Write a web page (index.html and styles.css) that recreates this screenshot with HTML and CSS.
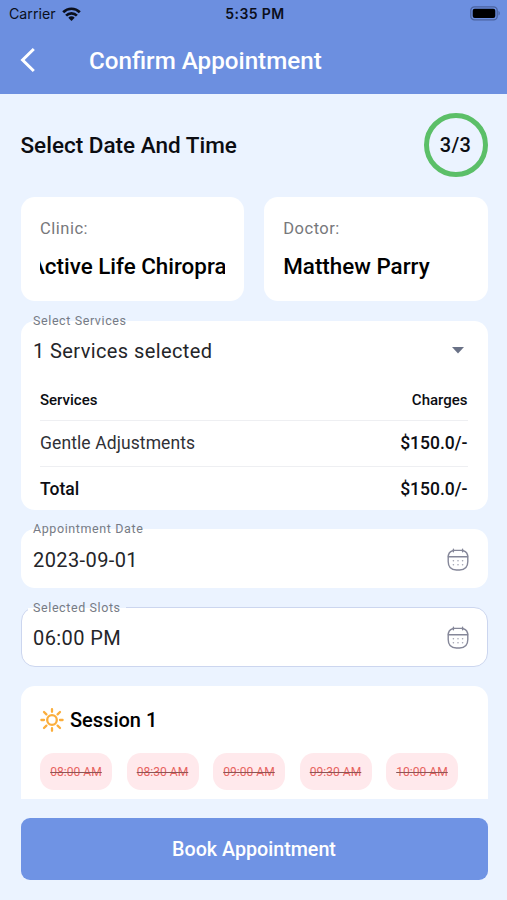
FILE: index.html
```html
<!DOCTYPE html>
<html lang="en">
<head>
<meta charset="utf-8">
<title>Confirm Appointment</title>
<link rel="stylesheet" href="styles.css">
</head>
<body>
<svg class="defs" width="0" height="0">
  <symbol id="calendar" viewBox="0 0 22 24">
    <g fill="none" stroke="#858799" stroke-width="1.4" stroke-linecap="round">
      <path d="M5.6 2.8C2.6 3.6 1.2 6 1.2 9.4v4.2c0 5.8 2.8 8.4 8.2 8.4h3.2c5.4 0 8.2-2.6 8.2-8.4V9.4c0-3.4-1.4-5.8-4.4-6.6"/>
      <path d="M6.6 2.4h8.8M1.3 8.7h19.4M6.4 1.3v2.4M15.6 1.3v2.4"/>
    </g>
    <path d="M6.4 12.8h.01M11 12.8h.01M15.6 12.8h.01M6.4 16.8h.01M11 16.8h.01M15.6 16.8h.01" fill="none" stroke="#a3a5b3" stroke-width="1.6" stroke-linecap="round"/>
  </symbol>
</svg>
<div class="screen">
  <header class="header">
    <div class="status">
      <div class="carrier"><span>Carrier</span>
        <svg width="19" height="14" viewBox="0 0 19 14"><g fill="none" stroke="#0b0f1c" stroke-width="2.7"><path d="M1.2 5.2a11.7 11.7 0 0 1 16.6 0"/><path d="M4.1 8.6a7.6 7.6 0 0 1 10.8 0"/></g><path d="M9.5 13.9 6.3 10.7a4.5 4.5 0 0 1 6.4 0z" fill="#0b0f1c"/></svg>
      </div>
      <div class="clock">5:35 PM</div>
      <svg class="battery" width="31" height="15" viewBox="0 0 31 15"><rect x=".8" y=".8" width="26.4" height="13" rx="3.6" fill="none" stroke="#4b639e" stroke-width="1.3"/><rect x="2.7" y="2.7" width="22.6" height="9.2" rx="2" fill="#000"/><path d="M28.5 5v4.6c1.7-.6 1.7-4 0-4.6z" fill="#4b639e"/></svg>
    </div>
    <div class="bar">
      <svg class="back" width="16" height="26" viewBox="0 0 16 26"><path d="M13.8 2 2.6 13l11.2 11" fill="none" stroke="#fff" stroke-width="3"/></svg>
      <h1>Confirm Appointment</h1>
    </div>
  </header>
  <main class="content">
    <div class="step"><h2>Select Date And Time</h2><div class="ring">3/3</div></div>
    <div class="people">
      <div class="card person"><div class="caption">Clinic:</div><div class="name scrolled"><span>Active Life Chiropractic</span></div></div>
      <div class="card person"><div class="caption">Doctor:</div><div class="name">Matthew Parry</div></div>
    </div>
    <section class="card services">
      <span class="label">Select Services</span>
      <div class="select"><span class="value">1 Services selected</span>
        <svg width="12" height="7" viewBox="0 0 12 7"><path d="M0 0h12L6 6.6z" fill="#697186"/></svg></div>
      <div class="table">
        <div class="row head"><b>Services</b><b>Charges</b></div>
        <div class="row"><span class="item">Gentle Adjustments</span><b>$150.0/-</b></div>
        <div class="row total"><b>Total</b><b>$150.0/-</b></div>
      </div>
    </section>
    <div class="card field"><span class="label">Appointment Date</span><span class="value date">2023-09-01</span><svg width="22" height="24"><use href="#calendar"/></svg></div>
    <div class="card field focused"><span class="label">Selected Slots</span><span class="value time">06:00 PM</span><svg width="22" height="24"><use href="#calendar"/></svg></div>
    <section class="card session">
      <div class="session-title">
        <svg width="24" height="24" viewBox="0 0 24 24"><g fill="none" stroke="#fbae3c" stroke-width="2.3" stroke-linecap="round"><circle cx="12" cy="12" r="4.8"/><path d="M12 1.2v2.6M12 20.2v2.6M1.4 12H4M20 12h2.6M4 4l2.4 2.4M17.6 17.6 20 20M4 20l2.4-2.4M17.6 6.4 20 4"/></g></svg>
        <h3>Session 1</h3>
      </div>
      <div class="slots"><s>08:00 AM</s><s>08:30 AM</s><s>09:00 AM</s><s>09:30 AM</s><s>10:00 AM</s></div>
    </section>
  </main>
  <button class="book">Book Appointment</button>
</div>
</body>
</html>
```
FILE: styles.css
```css
* { box-sizing: border-box; }
body { margin: 0; font-family: Roboto, "Liberation Sans", sans-serif; color: #0c0d12; }
h1, h2, h3 { margin: 0; font-weight: 500; white-space: nowrap; }
b { font-weight: 500; }
.defs { position: absolute; }
.screen { width: 507px; height: 900px; display: flex; flex-direction: column; background: #ebf3ff; overflow: hidden; }
.header { height: 94px; flex: none; background: #6c8fe0; }
.status { height: 27px; display: grid; grid-template-columns: 1fr auto 1fr; align-items: center; padding: 0 6px 0 9px; font-family: Inter, sans-serif; color: #0b0f1c; }
.carrier { display: flex; align-items: center; gap: 6px; font-size: 14.2px; }
.clock { font-size: 14px; font-weight: 600; letter-spacing: .4px; }
.battery { justify-self: end; }
.bar { height: 67px; display: flex; align-items: center; padding-left: 20px; }
.back { margin-right: 53px; margin-bottom: 2px; }
h1 { font-size: 24.2px; line-height: 30px; color: #fff; }
.content { height: 705px; flex: none; overflow: hidden; padding: 19px 19.5px 0 20.5px; }
.step { height: 64px; display: flex; align-items: center; justify-content: space-between; }
h2 { font-size: 22.5px; }
.ring { width: 64px; height: 64px; border: 5px solid #5bbf68; border-radius: 50%; display: flex; align-items: center; justify-content: center; font-size: 20px; font-weight: 500; letter-spacing: .4px; }
.card { background: #fff; border-radius: 14px; }
.people { display: grid; grid-template-columns: 1fr 1fr; gap: 19.5px; margin-top: 20px; }
.person { height: 104px; padding: 20px 19px 0 19.5px; min-width: 0; }
.caption { font-size: 16.5px; line-height: 24px; color: #77787b; letter-spacing: .5px; }
.name { font-size: 22.4px; font-weight: 500; line-height: 30px; margin-top: 10px; overflow: hidden; white-space: nowrap; color: #000; }
.scrolled span { display: inline-block; margin-left: -10px; }
.services { height: 189px; margin-top: 20px; position: relative; }
.label { position: absolute; left: 12.5px; top: -8px; font-size: 12.5px; line-height: 16px; color: #767b85; letter-spacing: .6px; white-space: nowrap; }
.value { font-size: 20px; color: #242529; letter-spacing: .4px; white-space: nowrap; }
.select { height: 59px; display: flex; align-items: center; justify-content: space-between; padding: 0 23.5px 0 12.5px; }
.table { padding: 0 20px 0 19.5px; }
.row { height: 46px; display: flex; align-items: center; justify-content: space-between; font-size: 17.5px; border-bottom: 1px solid #eeeff2; }
.row:nth-child(2) { padding-bottom: 2px; }
.row.head { height: 41px; font-size: 15px; }
.row.total { height: 43px; border: 0; }
.item { color: #303136; letter-spacing: .1px; }
.field { height: 59px; margin-top: 19px; position: relative; display: flex; align-items: center; justify-content: space-between; padding: 2px 18.5px 0 12.5px; }
.focused { height: 60px; border: 1px solid #ccd6ef; padding: 1px 17.5px 0 11.5px; }
.focused .label { top: -8px; left: 6.5px; padding: 0 5px; background: linear-gradient(#ebf3ff 8px, #fff 8px); }
.session { height: 130px; margin-top: 19px; padding: 21px 20px 0 19.5px; }
.session-title { display: flex; align-items: center; gap: 6px; height: 25px; }
h3 { font-size: 20px; color: #000; }
.slots { display: flex; gap: 14.5px; margin-top: 21px; }
.slots s { width: 72px; height: 37px; flex: none; border-radius: 14px; background: #ffe9ec; display: flex; align-items: center; justify-content: center; font-size: 12.1px; color: #e8635f; text-decoration: line-through #8a5656 1px; white-space: nowrap; }
.book { width: 467px; height: 62px; margin: 19px 19.5px 0 20.5px; flex: none; border: 0; border-radius: 9px; background: #6f93e4; color: #fff; font: 500 19.7px Roboto, sans-serif; }
```
